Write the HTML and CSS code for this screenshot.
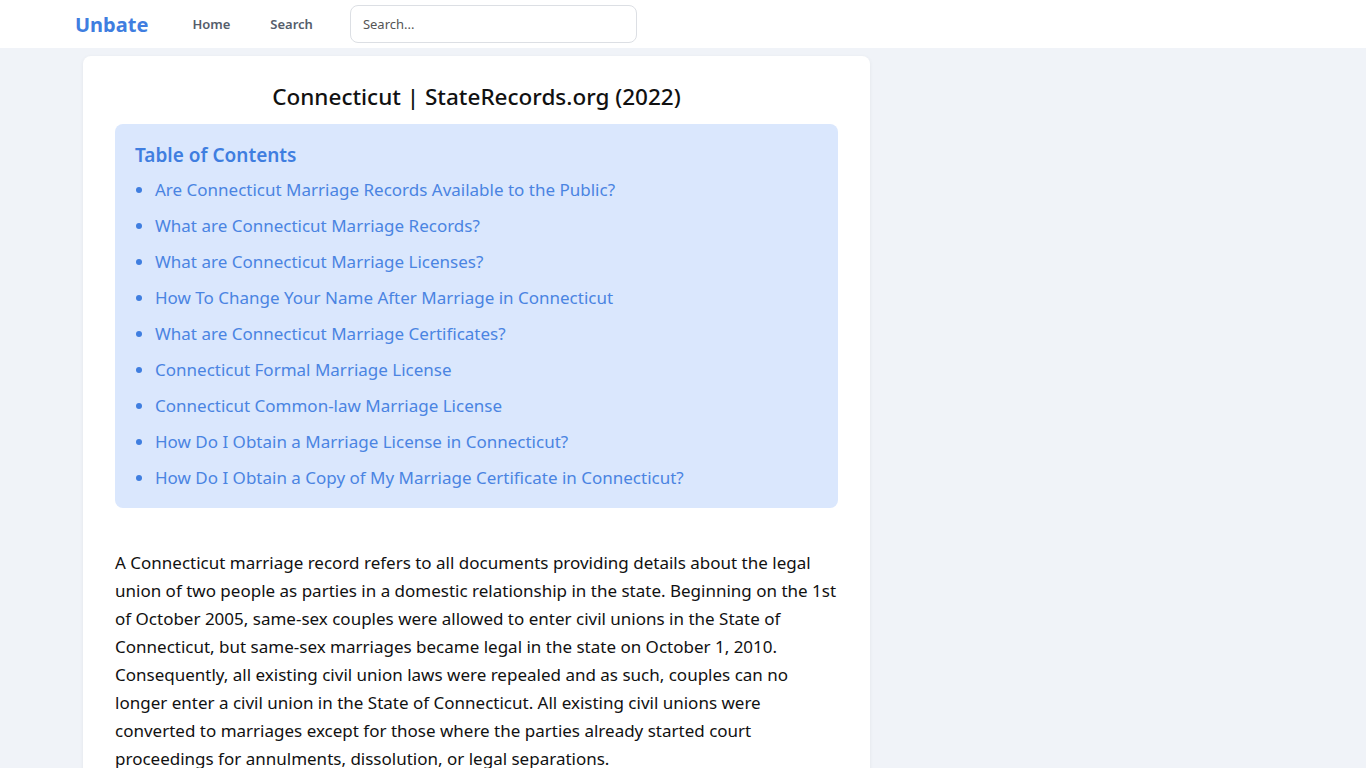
FILE: index.html
```html
<!DOCTYPE html>
<html lang="en">
<head>
    <meta charset="UTF-8">
    <meta name="viewport" content="width=device-width, initial-scale=1.0">
    <title>Connecticut | StateRecords.org (2022)</title>
    <link rel="stylesheet" href="styles.css">
</head>
<body>
    <header class="topbar">
        <div class="topbar-inner">
            <a href="#" class="logo">Unbate</a>
            <nav class="nav">
                <a href="#">Home</a>
                <a href="#">Search</a>
            </nav>
            <input type="text" class="search" placeholder="Search...">
        </div>
    </header>

    <main class="page">
        <article class="card">
            <h1 class="title">Connecticut | StateRecords.org (2022)</h1>

            <div class="toc">
                <h2>Table of Contents</h2>
                <ul>
                    <li><a href="#">Are Connecticut Marriage Records Available to the Public?</a></li>
                    <li><a href="#">What are Connecticut Marriage Records?</a></li>
                    <li><a href="#">What are Connecticut Marriage Licenses?</a></li>
                    <li><a href="#">How To Change Your Name After Marriage in Connecticut</a></li>
                    <li><a href="#">What are Connecticut Marriage Certificates?</a></li>
                    <li><a href="#">Connecticut Formal Marriage License</a></li>
                    <li><a href="#">Connecticut Common-law Marriage License</a></li>
                    <li><a href="#">How Do I Obtain a Marriage License in Connecticut?</a></li>
                    <li><a href="#">How Do I Obtain a Copy of My Marriage Certificate in Connecticut?</a></li>
                </ul>
            </div>

            <p class="text">A Connecticut marriage record refers to all documents providing details about the legal union of two people as parties in a domestic relationship in the state. Beginning on the 1st of October 2005, same-sex couples were allowed to enter civil unions in the State of Connecticut, but same-sex marriages became legal in the state on October 1, 2010. Consequently, all existing civil union laws were repealed and as such, couples can no longer enter a civil union in the State of Connecticut. All existing civil unions were converted to marriages except for those where the parties already started court proceedings for annulments, dissolution, or legal separations.</p>
        </article>
    </main>
</body>
</html>
```

FILE: styles.css
```css
body {
    margin: 0;
    font-family: 'Noto Sans', 'Open Sans', sans-serif;
    background: #f0f3f8;
    color: #111;
}

/* top navigation */
.topbar {
    background: #fff;
    height: 48px;
}

.topbar-inner {
    display: flex;
    align-items: center;
    height: 48px;
    padding-left: 75px;
}

.logo {
    color: #3f7ee0;
    font-size: 20px;
    font-weight: 700;
    text-decoration: none;
    margin-right: 44px;
}

.nav {
    display: flex;
    gap: 40px;
    margin-right: 37px;
}

.nav a {
    color: #555d6b;
    font-size: 13px;
    font-weight: 600;
    text-decoration: none;
}

.search {
    width: 287px;
    height: 38px;
    box-sizing: border-box;
    border: 1px solid #dcdfe4;
    border-radius: 8px;
    padding: 0 12px;
    font-family: inherit;
    font-size: 13px;
    color: #333;
}

.search::placeholder {
    color: #555;
}

/* article */
.page {
    padding: 8px 0 0 83px;
}

.card {
    width: 787px;
    box-sizing: border-box;
    background: #fff;
    border-radius: 8px;
    box-shadow: 0 1px 4px rgba(0, 0, 0, 0.06);
    padding: 24px 32px 20px;
}

.title {
    margin: 0 0 10px;
    text-align: center;
    font-size: 22.5px;
    font-weight: 500;
    line-height: 34px;
}

.toc {
    background: #dae7fd;
    border-radius: 8px;
    padding: 16px 20px 12px;
}

.toc h2 {
    margin: 0 0 2px;
    color: #3f7ee0;
    font-size: 19px;
    font-weight: 600;
    line-height: 30px;
}

.toc ul {
    margin: 0;
    padding-left: 20px;
    color: #3f7ee0;
}

.toc li {
    font-size: 17px;
    line-height: 36px;
}

.toc a {
    color: #4a84e2;
    text-decoration: none;
}

.text {
    margin: 41px 0 0;
    font-size: 17px;
    line-height: 28px;
    color: #111;
}
```
